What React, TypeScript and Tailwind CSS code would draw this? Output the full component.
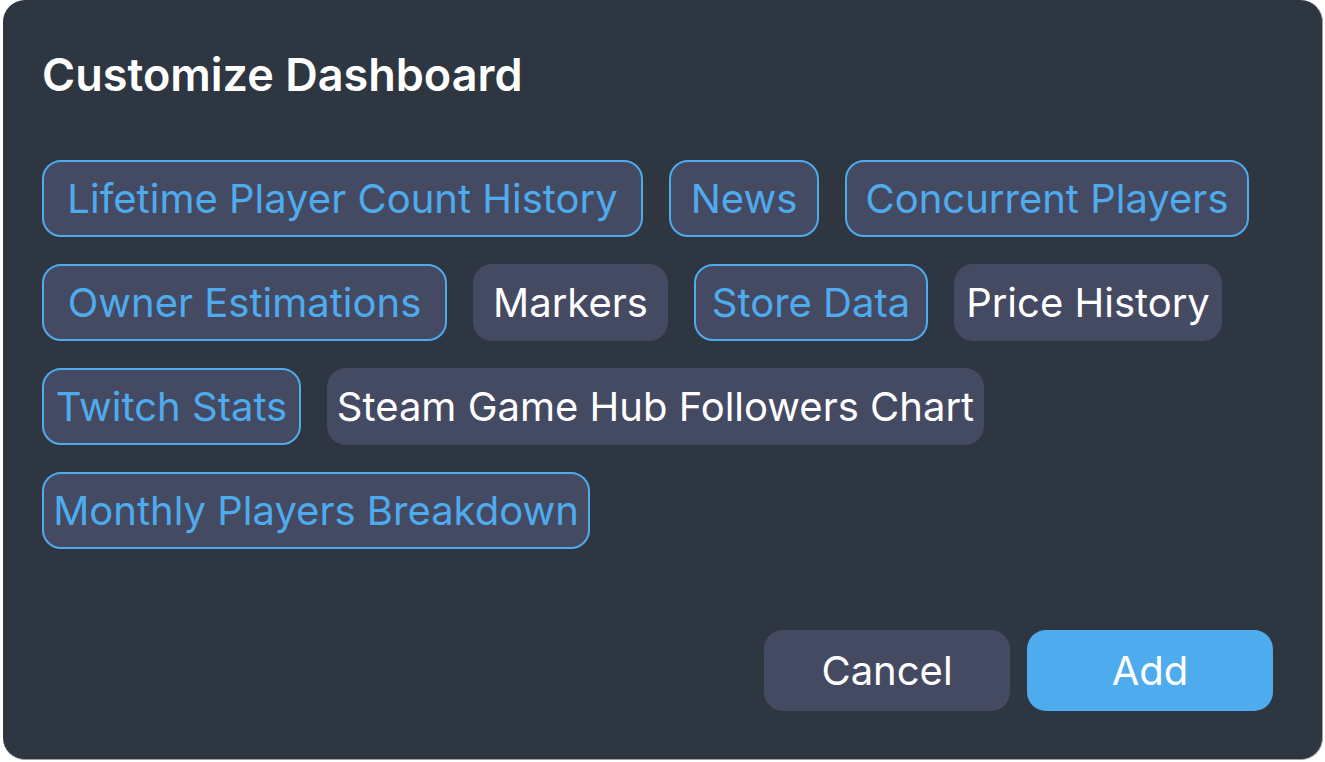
import React from "react";

type Chip = { label: string; selected: boolean; w: string };

const rows: Chip[][] = [
  [
    { label: "Lifetime Player Count History", selected: true, w: "w-[601px]" },
    { label: "News", selected: true, w: "w-[150px]" },
    { label: "Concurrent Players", selected: true, w: "w-[404px]" },
  ],
  [
    { label: "Owner Estimations", selected: true, w: "w-[405px]" },
    { label: "Markers", selected: false, w: "w-[195px]" },
    { label: "Store Data", selected: true, w: "w-[234px]" },
    { label: "Price History", selected: false, w: "w-[268px]" },
  ],
  [
    { label: "Twitch Stats", selected: true, w: "w-[259px]" },
    { label: "Steam Game Hub Followers Chart", selected: false, w: "w-[657px]" },
  ],
  [{ label: "Monthly Players Breakdown", selected: true, w: "w-[548px]" }],
];

export default function App() {
  return (
    <div
      className="w-[1325px] h-[762px] bg-white overflow-hidden"
      style={{ fontFamily: "Inter, 'Noto Sans', sans-serif" }}
    >
      <div className="ml-[3px] w-[1320px] h-[760px] rounded-[22px] bg-[#2e3641] flex flex-col pl-[39px] pr-[49px] pt-[48px] pb-[48px] border-r border-b border-[#9aa0a8]">
        <h1 className="text-[45px] leading-[54px] font-semibold text-white">
          Customize Dashboard
        </h1>
        <div className="mt-[58px] flex flex-col gap-y-[27px]">
          {rows.map((row, i) => (
            <div key={i} className="flex gap-x-[26px]">
              {row.map((c) => (
                <div
                  key={c.label}
                  className={
                    c.selected
                      ? `${c.w} h-[77px] rounded-[19px] bg-[#454a63] border-[2.5px] border-[#4eabee] text-[#4eabee] flex items-center justify-center text-[40px] whitespace-nowrap`
                      : `${c.w} h-[77px] rounded-[19px] bg-[#454a63] text-white flex items-center justify-center text-[40px] whitespace-nowrap`
                  }
                >
                  {c.label}
                </div>
              ))}
            </div>
          ))}
        </div>
        <div className="mt-auto flex justify-end gap-x-[17px]">
          <button className="w-[246px] h-[81px] rounded-[19px] bg-[#454a63] text-white text-[40px]">
            Cancel
          </button>
          <button className="w-[246px] h-[81px] rounded-[19px] bg-[#4eabee] text-white text-[40px]">
            Add
          </button>
        </div>
      </div>
    </div>
  );
}
